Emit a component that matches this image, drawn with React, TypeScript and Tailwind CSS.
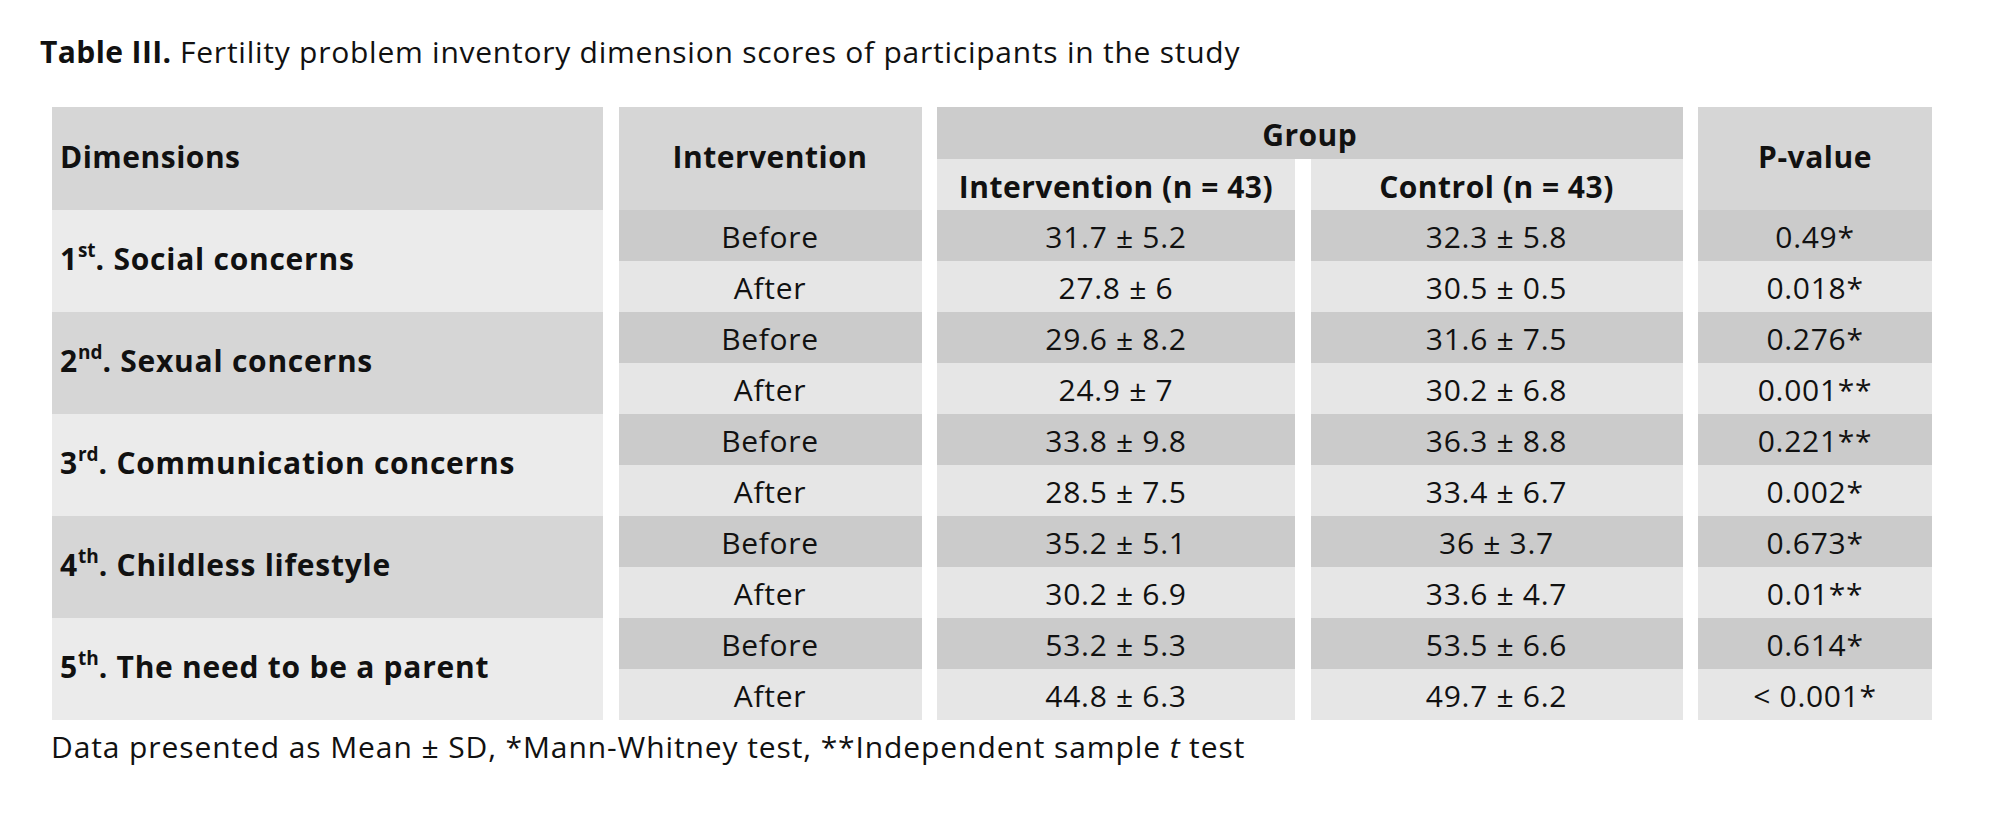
const rows = [
  { n: "1", sup: "st", label: "Social concerns", light: true, data: [["31.7 ± 5.2", "32.3 ± 5.8", "0.49*"], ["27.8 ± 6", "30.5 ± 0.5", "0.018*"]] },
  { n: "2", sup: "nd", label: "Sexual concerns", light: false, data: [["29.6 ± 8.2", "31.6 ± 7.5", "0.276*"], ["24.9 ± 7", "30.2 ± 6.8", "0.001**"]] },
  { n: "3", sup: "rd", label: "Communication concerns", light: true, data: [["33.8 ± 9.8", "36.3 ± 8.8", "0.221**"], ["28.5 ± 7.5", "33.4 ± 6.7", "0.002*"]] },
  { n: "4", sup: "th", label: "Childless lifestyle", light: false, data: [["35.2 ± 5.1", "36 ± 3.7", "0.673*"], ["30.2 ± 6.9", "33.6 ± 4.7", "0.01**"]] },
  { n: "5", sup: "th", label: "The need to be a parent", light: true, data: [["53.2 ± 5.3", "53.5 ± 6.6", "0.614*"], ["44.8 ± 6.3", "49.7 ± 6.2", "< 0.001*"]] },
];

function Cell({ text, dark }: { text: string; dark: boolean }) {
  return (
    <div className={`flex items-center justify-center pt-[3px] tracking-[0.7px] ${dark ? "bg-[#cbcbcb]" : "bg-[#e6e6e6]"}`}>
      {text}
    </div>
  );
}

export default function App() {
  return (
    <div
      className="w-[2000px] h-[819px] bg-white text-[#111111] text-[30px] leading-none"
      style={{ fontFamily: "'Open Sans', Lato, sans-serif" }}
    >
      <div className="pl-[40px] pt-[37px] tracking-[0.75px]">
        <span className="font-bold tracking-[0.4px]">Table III.</span> Fertility problem inventory dimension scores of participants in the study
      </div>

      <div className="ml-[52px] mt-[40px] grid grid-cols-[551px_303px_358px_372px_234px] gap-x-[15.5px] grid-rows-[52px_51px] auto-rows-[51px] font-bold tracking-[0.5px]">
        <div className="row-span-2 flex items-center pl-[8px] pb-[3px] bg-[#d6d6d6]">Dimensions</div>
        <div className="row-span-2 flex items-center justify-center pb-[3px] bg-[#d6d6d6]">Intervention</div>
        <div className="col-span-2 flex items-center justify-center pt-[4px] bg-[#cccccc]">Group</div>
        <div className="row-span-2 flex items-center justify-center pb-[3px] bg-[#d6d6d6]">P-value</div>
        <div className="flex items-center justify-center pt-[4px] bg-[#e6e6e6]">Intervention (n = 43)</div>
        <div className="flex items-center justify-center pt-[4px] bg-[#e6e6e6]">Control (n = 43)</div>

        {rows.map((r) => (
          <>
            <div
              key={r.n + "d"}
              className={`row-span-2 flex items-center pl-[8px] pb-[4px] tracking-[0.75px] ${r.light ? "bg-[#ebebeb]" : "bg-[#d6d6d6]"}`}
            >
              {r.n}
              <sup className="text-[19px] tracking-normal">{r.sup}</sup>. {r.label}
            </div>
            <div className="contents font-normal">
              <Cell text="Before" dark />
              {r.data[0].map((t, i) => (
                <Cell key={"b" + i} text={t} dark />
              ))}
              <Cell text="After" dark={false} />
              {r.data[1].map((t, i) => (
                <Cell key={"a" + i} text={t} dark={false} />
              ))}
            </div>
          </>
        ))}
      </div>

      <div className="pl-[51px] pt-[12px] tracking-[0.9px]">
        Data presented as Mean ± SD, *Mann-Whitney test, **Independent sample <i>t</i> test
      </div>
    </div>
  );
}
